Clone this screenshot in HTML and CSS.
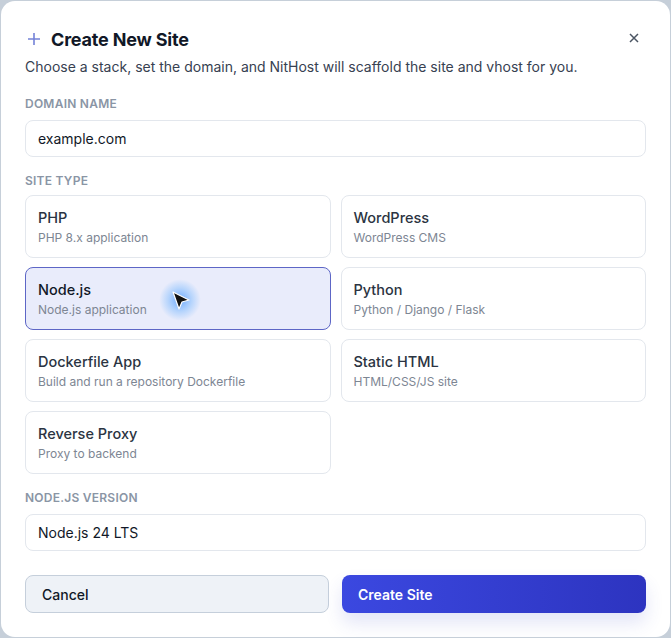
FILE: index.html
```html
<!DOCTYPE html>
<html lang="en">

<head>
    <meta charset="UTF-8">
    <meta name="viewport" content="width=device-width, initial-scale=1.0">
    <title>Create New Site</title>
    <link rel="stylesheet" href="styles.css">
</head>

<body>
    <div class="modal">
        <div class="modal-head">
            <h2 class="modal-title">
                <svg class="plus" width="14" height="14" viewBox="0 0 14 14"><path d="M7 1v12M1 7h12" /></svg>
                Create New Site
            </h2>
            <button class="close" type="button">
                <svg width="10" height="10" viewBox="0 0 10 10"><path d="M1 1l8 8M9 1l-8 8" /></svg>
            </button>
        </div>
        <p class="modal-sub">Choose a stack, set the domain, and NitHost will scaffold the site and vhost for you.</p>

        <label class="field-label">Domain Name</label>
        <div class="input">example.com</div>

        <label class="field-label">Site Type</label>
        <div class="types">
            <div class="type">
                <div class="type-name">PHP</div>
                <div class="type-desc">PHP 8.x application</div>
            </div>
            <div class="type">
                <div class="type-name">WordPress</div>
                <div class="type-desc">WordPress CMS</div>
            </div>
            <div class="type selected">
                <div class="type-name">Node.js</div>
                <div class="type-desc">Node.js application</div>
            </div>
            <div class="type">
                <div class="type-name">Python</div>
                <div class="type-desc">Python / Django / Flask</div>
            </div>
            <div class="type">
                <div class="type-name">Dockerfile App</div>
                <div class="type-desc">Build and run a repository Dockerfile</div>
            </div>
            <div class="type">
                <div class="type-name">Static HTML</div>
                <div class="type-desc">HTML/CSS/JS site</div>
            </div>
            <div class="type">
                <div class="type-name">Reverse Proxy</div>
                <div class="type-desc">Proxy to backend</div>
            </div>
        </div>

        <label class="field-label">Node.js Version</label>
        <div class="input">Node.js 24 LTS</div>

        <div class="actions">
            <button class="btn btn-cancel" type="button">Cancel</button>
            <button class="btn btn-create" type="button">Create Site</button>
        </div>

        <!-- pointer with click highlight -->
        <div class="pointer">
            <div class="pointer-glow"></div>
            <svg width="20" height="20" viewBox="0 0 20 20"><path d="M2 2 L18 10 L11 12 L8 19 Z" /></svg>
        </div>
    </div>
</body>
</html>
```

FILE: styles.css
```css
body {
    margin: 0;
    background-color: #c6cfd9;
    font-family: Inter, 'Noto Sans', sans-serif;
    color: #111827;
}

.modal {
    position: relative;
    box-sizing: border-box;
    width: 669px;
    height: 636px;
    margin: 1px 0 0 1px;
    padding: 24px 24px 0 24px;
    background-color: #fff;
    border-radius: 14px;
}

.modal-head {
    display: flex;
    align-items: center;
    justify-content: space-between;
    height: 28px;
}

.modal-title {
    display: flex;
    align-items: center;
    gap: 10px;
    margin: 0;
    font-size: 18px;
    font-weight: 700;
    color: #111827;
    letter-spacing: -0.01em;
}

.plus {
    margin-left: 2px;
}

.plus path {
    stroke: #7482d8;
    stroke-width: 1.6;
    fill: none;
}

.close {
    border: none;
    background: none;
    padding: 0;
    margin-right: 2px;
    margin-top: -2px;
    width: 20px;
    height: 20px;
    display: flex;
    align-items: center;
    justify-content: center;
}

.close path {
    stroke: #4b5563;
    stroke-width: 1.5;
    fill: none;
}

.modal-sub {
    margin: 4px 0 0 0;
    font-size: 14px;
    line-height: 20px;
    color: #374151;
}

.field-label {
    display: block;
    margin-top: 19px;
    font-size: 12px;
    line-height: 16px;
    font-weight: 600;
    color: #8a95a5;
    text-transform: uppercase;
    letter-spacing: 0.02em;
}

.input {
    box-sizing: border-box;
    height: 37px;
    margin-top: 8px;
    padding: 0 12px;
    border: 1px solid #e3e7ed;
    border-radius: 8px;
    font-size: 14px;
    line-height: 35px;
    color: #111827;
}

.input + .field-label {
    margin-top: 16px;
}

.types {
    display: grid;
    grid-template-columns: 1fr 1fr;
    gap: 9px 10px;
    margin-top: 6px;
}

.type {
    box-sizing: border-box;
    height: 63px;
    padding: 12px 12px 0 12px;
    border: 1px solid #e3e7ed;
    border-radius: 8px;
}

.type.selected {
    background-color: #e9ecfb;
    border-color: #5d66c6;
}

.type-name {
    font-size: 14.5px;
    line-height: 20px;
    font-weight: 500;
    color: #2b3442;
}

.type.selected .type-name {
    color: #111827;
}

.type-desc {
    margin-top: 1px;
    font-size: 12px;
    line-height: 18px;
    color: #7d8693;
}

.types + .field-label {
    margin-top: 16px;
}

.actions {
    display: grid;
    grid-template-columns: 1fr 1fr;
    gap: 13px;
    margin-top: 24px;
}

.btn {
    height: 38px;
    padding: 0 16px;
    border-radius: 8px;
    text-align: left;
    font-family: Inter, 'Noto Sans', sans-serif;
    font-size: 14px;
}

.btn-cancel {
    background-color: #eef2f7;
    border: 1px solid #c5cfdb;
    color: #111827;
    font-weight: 500;
}

.btn-create {
    border: none;
    background: linear-gradient(90deg, #3b48e0, #2d34c0);
    color: #fff;
    font-weight: 600;
    box-shadow: 0 10px 18px rgba(60, 72, 200, 0.14);
}

.pointer {
    position: absolute;
    left: 170px;
    top: 289px;
    width: 20px;
    height: 20px;
}

.pointer-glow {
    position: absolute;
    left: -12px;
    top: -11px;
    width: 42px;
    height: 42px;
    border-radius: 50%;
    background: radial-gradient(circle, rgba(70, 150, 255, 0.75) 0%, rgba(90, 170, 255, 0.35) 40%, rgba(120, 180, 255, 0) 70%);
}

.pointer svg {
    position: relative;
}

.pointer path {
    fill: #111;
    stroke: #fff;
    stroke-width: 1.2;
    stroke-linejoin: round;
}
```
